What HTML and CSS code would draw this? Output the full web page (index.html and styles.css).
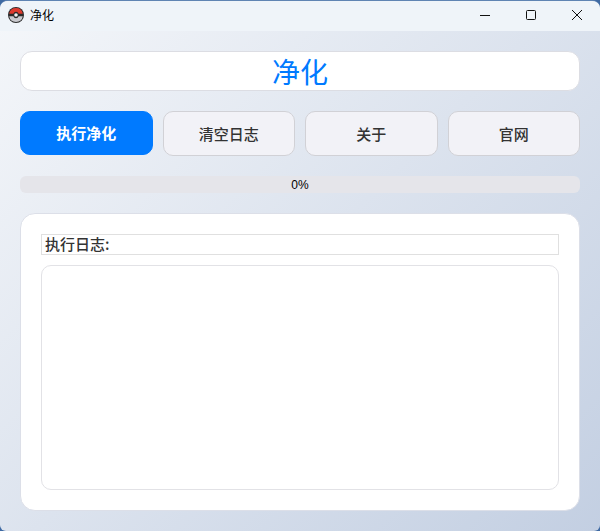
FILE: index.html
```html
<!DOCTYPE html>
<html lang="zh-CN">
<head>
<meta charset="utf-8">
<title>净化</title>
<link rel="stylesheet" href="styles.css">
</head>
<body>
<div class="window">
  <header class="titlebar">
    <div class="app-id">
      <svg class="app-icon" width="16" height="16" viewBox="0 0 16 16">
        <circle cx="8" cy="8" r="8" fill="#2b2b2b"/>
        <path d="M1.200 6.800A6.900 6.900 0 0 1 14.800 6.800H10.600A2.700 2.700 0 0 0 5.400 6.800Z" fill="#dc3a2e"/>
        <path d="M1.200 9.200A6.900 6.900 0 0 0 14.800 9.200H10.600A2.700 2.700 0 0 1 5.400 9.200Z" fill="#c9c9ce"/>
        <circle cx="8" cy="8" r="1.800" fill="#f4f4f4"/>
      </svg>
      <span class="app-name">净化</span>
    </div>
    <div class="win-controls">
      <span class="win-btn"><svg width="12" height="12" viewBox="0 0 12 12"><path d="M1 6.500H11" stroke="#111" fill="none"/></svg></span>
      <span class="win-btn"><svg width="12" height="12" viewBox="0 0 12 12"><rect x="1.500" y="1.500" width="9" height="9" rx="1" stroke="#111" fill="none"/></svg></span>
      <span class="win-btn"><svg width="12" height="12" viewBox="0 0 12 12"><path d="M1 1L11 11M11 1L1 11" stroke="#111" fill="none"/></svg></span>
    </div>
  </header>
  <main class="content">
    <h1 class="page-title">净化</h1>
    <div class="actions">
      <button class="btn btn-primary">执行净化</button>
      <button class="btn">清空日志</button>
      <button class="btn">关于</button>
      <button class="btn">官网</button>
    </div>
    <div class="progress">0%</div>
    <section class="log-card">
      <div class="log-label">执行日志:</div>
      <div class="log-box"></div>
    </section>
  </main>
</div>
</body>
</html>
```
FILE: styles.css
```css
* { box-sizing: border-box; }
html, body {
  margin: 0;
  height: 100%;
  background: #3f6aa3;
  overflow: hidden;
}
body { font-family: "Noto Sans CJK SC", "Liberation Sans", sans-serif; }
.window {
  width: 600px;
  height: 531px;
  display: flex;
  flex-direction: column;
  border-radius: 8px 8px 6px 6px;
  overflow: hidden;
  background: linear-gradient(135deg, #f5f7fa 0%, #c3cfe2 100%);
  border-top: 1px solid #5f84b3;
}
.titlebar {
  height: 30px;
  flex: none;
  display: flex;
  justify-content: space-between;
  align-items: flex-start;
  background: #eff4f9;
  padding-left: 8px;
}
.app-id { display: flex; align-items: center; gap: 6px; height: 28px; }
.app-icon { display: block; }
.app-name { font-size: 12px; color: #000; line-height: 14px; }
.win-controls { display: flex; }
.win-btn {
  width: 46px;
  height: 28px;
  display: flex;
  align-items: center;
  justify-content: center;
}
.content {
  flex: 1;
  display: flex;
  flex-direction: column;
  padding: 20px;
}
.page-title {
  margin: 0;
  height: 40px;
  flex: none;
  background: #fff;
  border: 1px solid #dcdde3;
  border-radius: 12px;
  color: #007aff;
  font-size: 28px;
  font-weight: 400;
  line-height: 38px;
  text-align: center;
}
.actions {
  display: flex;
  gap: 10px;
  margin-top: 20px;
  height: 45px;
  flex: none;
}
.btn {
  flex: 1;
  min-width: 0;
  font: 500 15px "Noto Sans CJK SC", "Liberation Sans", sans-serif;
  color: #333;
  background: #f2f2f7;
  border: 1px solid #d1d1d6;
  border-radius: 10px;
  padding: 0 0 1px;
}
.btn-primary {
  background: #007aff;
  border-color: #007aff;
  color: #fff;
  height: 44px;
  font-weight: 700;
}
.progress {
  margin-top: 20px;
  height: 17px;
  flex: none;
  background: #e5e5ea;
  border-radius: 6px;
  font: 12px/18px "Liberation Sans", sans-serif;
  color: #000;
  text-align: center;
}
.log-card {
  margin-top: 20px;
  flex: 1;
  display: flex;
  flex-direction: column;
  background: #fff;
  border-radius: 15px;
  border: 1px solid #dcdfe8;
  padding: 20px;
}
.log-label {
  height: 21px;
  flex: none;
  border: 1px solid #e0e0e0;
  padding-left: 3px;
  font-size: 15px;
  font-weight: 500;
  line-height: 18px;
  color: #333;
}
.log-box {
  margin-top: 10px;
  flex: 1;
  border: 1px solid #e2e2e6;
  border-radius: 10px;
}
```
